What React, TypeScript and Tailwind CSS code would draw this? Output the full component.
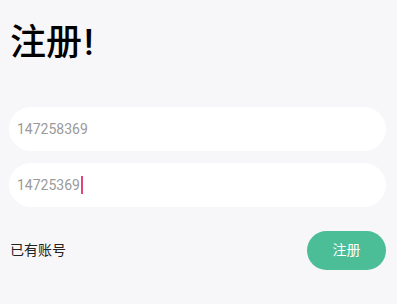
export default function App() {
  return (
    <div
      className="h-[304px] w-[397px] bg-[#f7f7f9] pl-[9px] pr-[11px]"
      style={{ fontFamily: 'Roboto, "Noto Sans CJK SC", sans-serif' }}
    >
      {/* Title */}
      <h1 className="pt-[25px] pl-[1px] text-[36px] leading-[36px] font-medium text-black">
        注册<span className="ml-[2px]">!</span>
      </h1>

      {/* Inputs */}
      <div className="mt-[46px] flex flex-col gap-[12px]">
        <div className="flex h-[44px] items-center rounded-full bg-white pl-[8px] text-[14px] text-[#9a9a9a]">
          147258369
        </div>
        <div className="flex h-[44px] items-center rounded-full bg-white pl-[8px] text-[14px] text-[#9a9a9a]">
          14725369
          <span className="ml-[1px] h-[18px] w-[2px] bg-[#e0457b]" />
        </div>
      </div>

      {/* Bottom row */}
      <div className="mt-[24px] flex items-center justify-between">
        <span className="pl-[1px] text-[14px] text-[#222]">已有账号</span>
        <button className="flex h-[39px] w-[79px] items-center justify-center rounded-full bg-[#4bbd97] text-[14px] text-white">
          注册
        </button>
      </div>
    </div>
  );
}
